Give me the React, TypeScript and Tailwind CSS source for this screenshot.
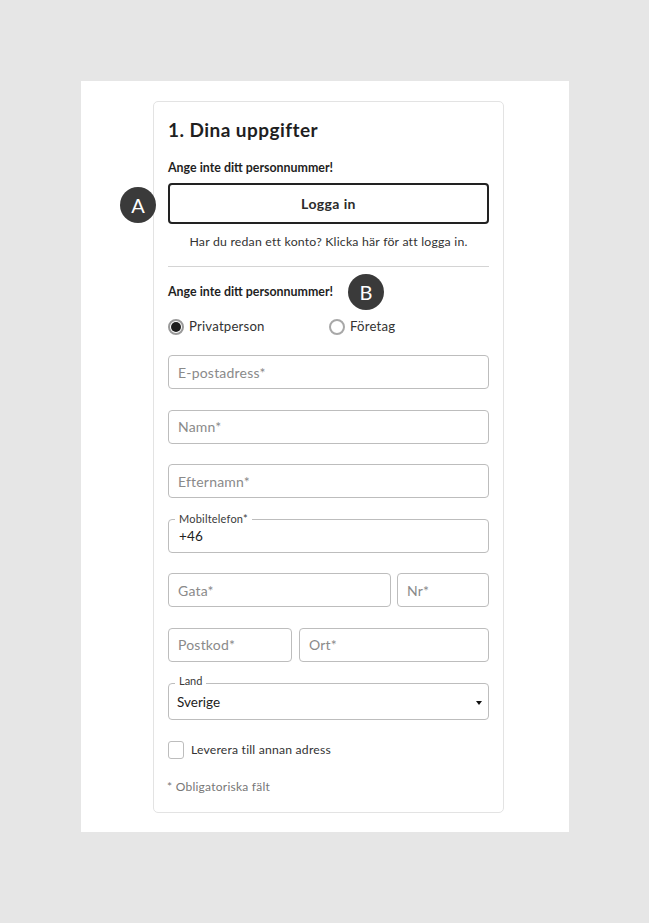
const font = { fontFamily: '"Lato", "Liberation Sans", sans-serif' };

function Field({ label, className = 'w-full' }: { label: string; className?: string }) {
    return (
        <div className={`${className} h-[34px] shrink-0 border border-[#bdbdbd] rounded-[4px] flex items-center px-[9px] text-[14px] tracking-[0.2px] text-[#8a8a8a] bg-white`}>
            {label}
        </div>
    );
}

function Legend({ label, className, labelClass, children }: { label: string; className: string; labelClass: string; children: React.ReactNode }) {
    return (
        <div className={`relative w-full shrink-0 border border-[#bdbdbd] rounded-[4px] flex items-center ${className}`}>
            <span className={`absolute left-[6px] bg-white px-[4px] text-[11px] leading-[14px] text-[#3a3a3a] ${labelClass}`}>{label}</span>
            {children}
        </div>
    );
}

function Badge({ letter, className }: { letter: string; className: string }) {
    return (
        <div className={`absolute w-[36px] h-[36px] rounded-full bg-[#3a3a3a] text-white flex items-center justify-center text-[20px] ${className}`}>
            {letter}
        </div>
    );
}

export default function App() {
    return (
        <div className="w-[649px] h-[923px] bg-[#e6e6e6] pt-[81px] pl-[81px]" style={font}>
            <div className="relative w-[488px] h-[751px] bg-white pt-[20px] pl-[72px]">
                <Badge letter="A" className="left-[39px] top-[106px]" />
                <Badge letter="B" className="left-[267px] top-[193px]" />
                <div className="w-[351px] h-[712px] border border-[#e3e3e3] rounded-[5px] pt-[16px] pl-[14px] pr-[14px] text-[#1f1f1f]">
                    <h1 className="text-[19px] leading-[24px] font-bold tracking-[0.45px]">1. Dina uppgifter</h1>
                    <p className="mt-[18px] text-[12.4px] leading-[16px] font-bold">Ange inte ditt personnummer!</p>
                    <button className="mt-[7px] w-full h-[41px] border-2 border-[#222222] rounded-[4px] text-[14px] font-bold tracking-[0.4px] text-[#2b2b2b]">
                        Logga in
                    </button>
                    <p className="mt-[10px] text-center text-[12.3px] leading-[16px] tracking-[0.2px] text-[#333333]">
                        Har du redan ett konto? Klicka här för att logga in.
                    </p>
                    <div className="mt-[16px] h-px bg-[#d4d4d4]" />
                    <p className="mt-[17px] text-[12.4px] leading-[16px] font-bold">Ange inte ditt personnummer!</p>
                    <div className="mt-[18px] flex items-center h-[18px] text-[13.2px] tracking-[0.2px] text-[#333333]">
                        <span className="w-[16px] h-[16px] rounded-full border-2 border-[#9a9a9a] flex items-center justify-center">
                            <span className="w-[10px] h-[10px] rounded-full bg-[#1c1c1c]" />
                        </span>
                        <span className="ml-[5px] w-[140px]">Privatperson</span>
                        <span className="w-[16px] h-[16px] rounded-full border-2 border-[#a8a8a8]" />
                        <span className="ml-[5px]">Företag</span>
                    </div>
                    <div className="mt-[19px] flex flex-col gap-[20.5px]">
                        <Field label="E-postadress*" />
                        <Field label="Namn*" />
                        <Field label="Efternamn*" />
                        <Legend label="Mobiltelefon*" labelClass="-top-[8px]" className="h-[34px] pt-[2px] px-[10px] text-[13.5px] tracking-[0.2px] text-[#222222]">
                            +46
                        </Legend>
                        <div className="flex gap-[6px]">
                            <Field label="Gata*" className="w-[223px]" />
                            <Field label="Nr*" className="flex-1" />
                        </div>
                        <div className="flex gap-[7px]">
                            <Field label="Postkod*" className="w-[124px]" />
                            <Field label="Ort*" className="flex-1" />
                        </div>
                        <Legend label="Land" labelClass="-top-[10px]" className="mt-[1px] h-[37px] pt-[2px] pl-[8px] pr-[6px] justify-between text-[13.5px] text-[#222222]">
                            Sverige
                            <svg width="6" height="4" viewBox="0 0 6 4"><path d="M0 0h6L3 4z" fill="#111111" /></svg>
                        </Legend>
                    </div>
                    <div className="mt-[21px] flex items-center h-[18px]">
                        <span className="w-[16px] h-[18px] border border-[#bdbdbd] rounded-[3px]" />
                        <span className="ml-[7px] text-[12.2px] tracking-[0.2px] text-[#333333]">Leverera till annan adress</span>
                    </div>
                    <p className="mt-[20px] -ml-[1px] text-[12px] leading-[16px] tracking-[0.25px] text-[#777777]">* Obligatoriska fält</p>
                </div>
            </div>
        </div>
    );
}
